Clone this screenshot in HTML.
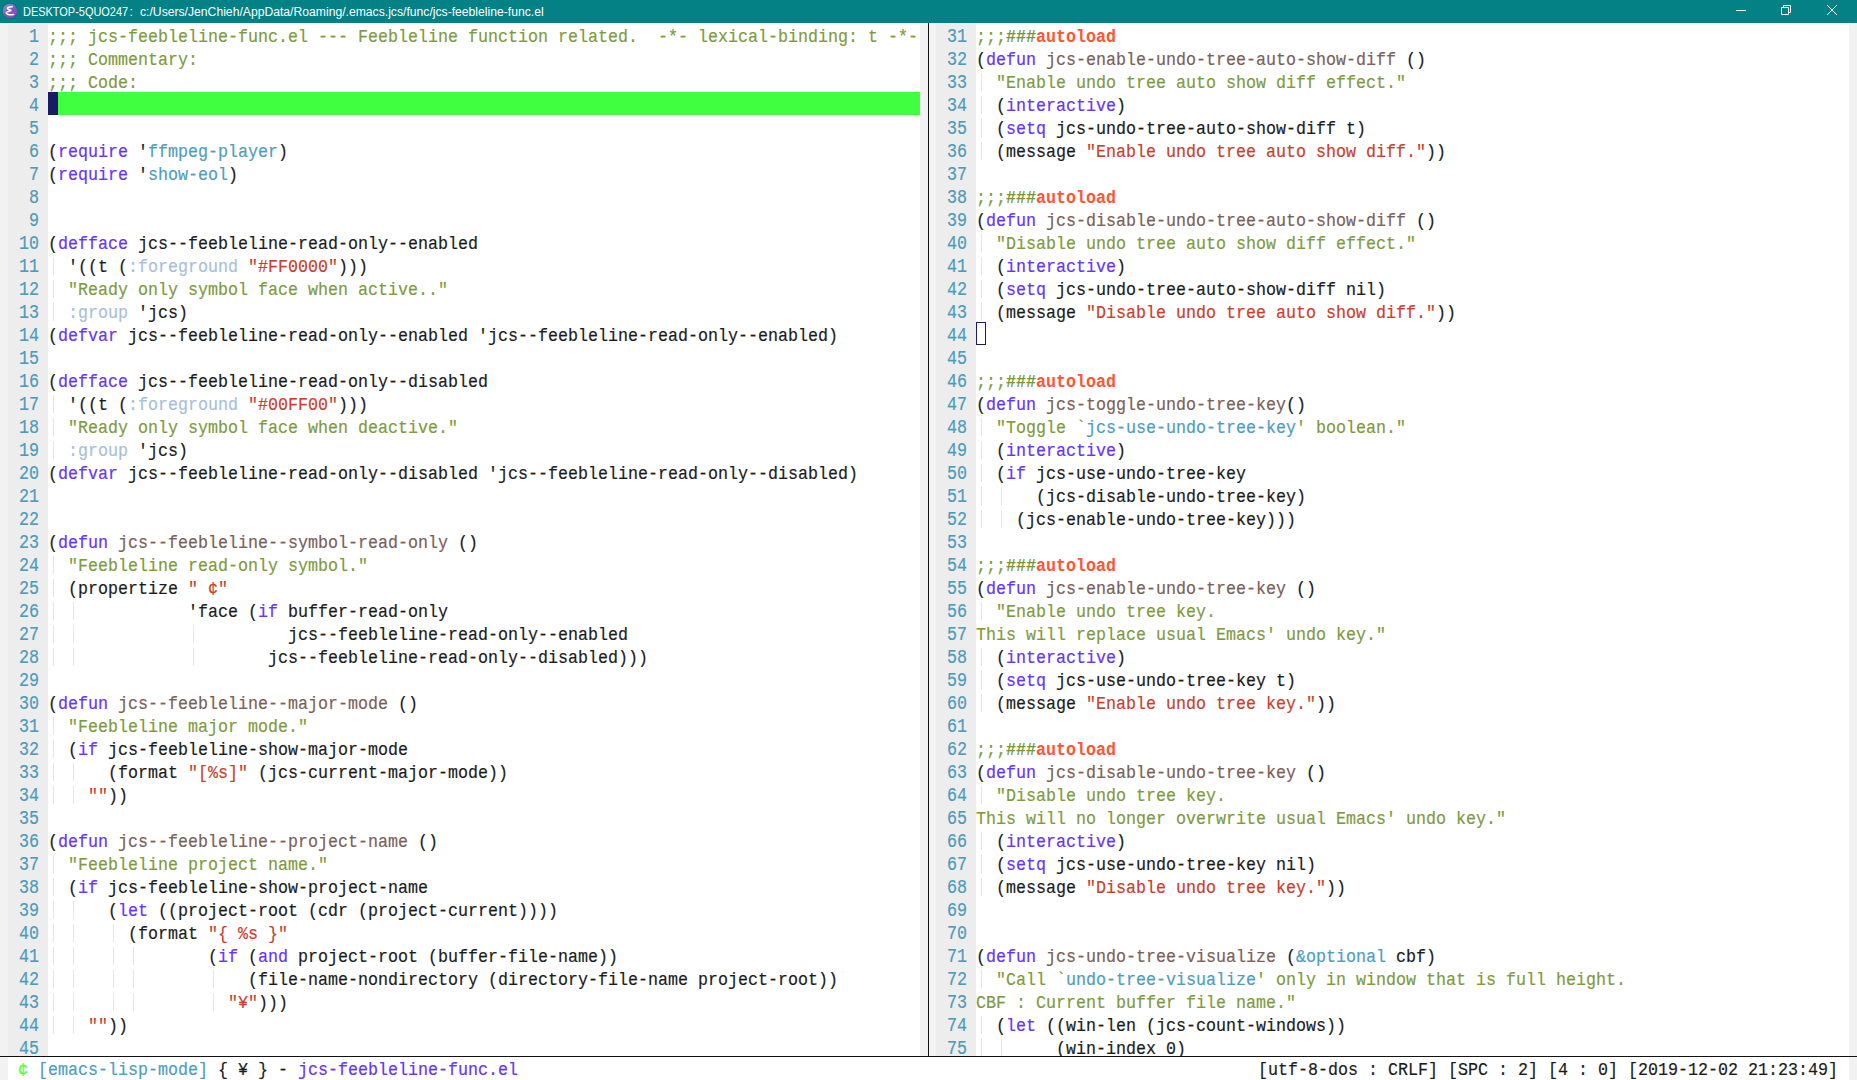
<!DOCTYPE html>
<html><head><meta charset="utf-8"><style>
*{margin:0;padding:0}
html,body{width:1857px;height:1080px;overflow:hidden;background:#fff}
body{position:relative;font-family:"Liberation Mono",monospace}
.abs{position:absolute}
#title{position:absolute;left:0;top:0;width:1857px;height:23px;background:#038185}
.tt{position:absolute;top:5px;transform-origin:0 0;font-family:"Liberation Sans",sans-serif;font-size:12.6px;color:#fff;white-space:pre;line-height:15px}
.tx,.ln{position:absolute;white-space:pre;font-size:19px;line-height:23px;height:23px;transform:scaleX(0.87705);transform-origin:0 0;color:#1b1b1b;-webkit-text-stroke:0.2px currentColor}
.ln{color:#4b9bbc;transform-origin:100% 0;font-size:20px;transform:scaleX(0.8333)}
.g{position:absolute;width:1px;height:18px;background:#e3e6ea}
i{font-style:normal}
i.k{color:#6633ff}
i.f{color:#7b5f5a}
i.c{color:#7f9a3c}
i.d{color:#7f9a3c}
i.s{color:#c9402c}
i.q{color:#4e9dbd}
i.p{color:#a8bfd8}
i.a{color:#ff5533;font-weight:bold;-webkit-text-stroke:0}
i.h{color:#759636;font-weight:bold;-webkit-text-stroke:0}
</style></head><body>
<div id="title"></div>
<svg class="abs" style="left:0;top:0" width="23" height="23"><defs><linearGradient id="eg" x1="0.2" y1="0.1" x2="0.8" y2="0.95"><stop offset="0" stop-color="#8f86cf"/><stop offset="0.55" stop-color="#7c56b8"/><stop offset="1" stop-color="#a43cc4"/></linearGradient></defs><circle cx="9.9" cy="10.9" r="7.7" fill="#2f4a78" opacity="0.45"/><circle cx="9.9" cy="10.9" r="7.2" fill="url(#eg)"/><path d="M12.3 6.5 C10.6 7.3 7.8 6.9 7.4 8.2 C7.3 9.3 10.2 9.8 11 10.5 C9.6 11.3 6.1 11.8 6.3 12.9 C6.9 14.5 11 14.8 13.6 14.6" stroke="#fff" stroke-width="1.5" fill="none" stroke-linecap="round" stroke-linejoin="round"/></svg>
<div class="tt" style="left:23px;transform:scaleX(0.87)">DESKTOP-5QUO247</div>
<div class="tt" style="left:129.5px">:</div>
<div class="tt" style="left:139.8px;transform:scaleX(0.966)">c:/Users/JenChieh/AppData/Roaming/.emacs.jcs/func/jcs-feebleline-func.el</div>
<div class="abs" style="left:1736px;top:10px;width:10px;height:1px;background:#fff"></div>
<svg class="abs" style="left:1779px;top:3px" width="14" height="14"><path d="M2.5 4.5h7v7h-7z M4.5 4.5v-2h7v7h-2" stroke="#fff" stroke-width="1" fill="none"/></svg>
<svg class="abs" style="left:1825px;top:3px" width="14" height="14"><path d="M2 2L12 12M12 2L2 12" stroke="#fff" stroke-width="1" fill="none"/></svg>
<div class="abs" style="left:0;top:23px;width:8px;height:1033px;background:#f2f2f2"></div>
<div class="abs" style="left:8px;top:23px;width:40px;height:1033px;background:#ededed"></div>
<div class="abs" style="left:920px;top:23px;width:8px;height:1033px;background:#f2f2f2"></div>
<div class="abs" style="left:928px;top:23px;width:1px;height:1033px;background:#111"></div>
<div class="abs" style="left:929px;top:23px;width:7px;height:1033px;background:#f2f2f2"></div>
<div class="abs" style="left:936px;top:23px;width:40px;height:1033px;background:#ededed"></div>
<div class="abs" style="left:1849px;top:23px;width:8px;height:1033px;background:#f2f2f2"></div>
<div class="abs" style="left:48px;top:92px;width:872px;height:23px;background:#40ff40"></div>
<div class="abs" style="left:48px;top:92px;width:10px;height:23px;background:#1a1a66"></div>
<div class="abs" style="left:976px;top:322px;width:8px;height:21px;border:1px solid #1a1a66"></div>
<div class="numwrap">
<div class="ln" style="top:25px;right:1818px">1</div>
<div class="tx" style="top:26px;left:48px"><i class="c">;;; jcs-feebleline-func.el --- Feebleline function related.  -*- lexical-binding: t -*-</i></div>
<div class="ln" style="top:48px;right:1818px">2</div>
<div class="tx" style="top:49px;left:48px"><i class="c">;;; Commentary:</i></div>
<div class="ln" style="top:71px;right:1818px">3</div>
<div class="tx" style="top:72px;left:48px"><i class="c">;;; Code:</i></div>
<div class="ln" style="top:94px;right:1818px">4</div>
<div class="ln" style="top:117px;right:1818px">5</div>
<div class="ln" style="top:140px;right:1818px">6</div>
<div class="tx" style="top:141px;left:48px">(<i class="k">require</i> &#x27;<i class="q">ffmpeg-player</i>)</div>
<div class="ln" style="top:163px;right:1818px">7</div>
<div class="tx" style="top:164px;left:48px">(<i class="k">require</i> &#x27;<i class="q">show-eol</i>)</div>
<div class="ln" style="top:186px;right:1818px">8</div>
<div class="ln" style="top:209px;right:1818px">9</div>
<div class="ln" style="top:232px;right:1818px">10</div>
<div class="tx" style="top:233px;left:48px">(<i class="k">defface</i> jcs--feebleline-read-only--enabled</div>
<div class="ln" style="top:255px;right:1818px">11</div>
<div class="tx" style="top:256px;left:48px">  &#x27;((t (<i class="p">:foreground</i> <i class="s">&quot;#FF0000&quot;</i>)))</div>
<div class="g" style="top:257px;left:53px"></div>
<div class="ln" style="top:278px;right:1818px">12</div>
<div class="tx" style="top:279px;left:48px">  <i class="d">&quot;Ready only symbol face when active..&quot;</i></div>
<div class="g" style="top:280px;left:53px"></div>
<div class="ln" style="top:301px;right:1818px">13</div>
<div class="tx" style="top:302px;left:48px">  <i class="p">:group</i> &#x27;jcs)</div>
<div class="g" style="top:303px;left:53px"></div>
<div class="ln" style="top:324px;right:1818px">14</div>
<div class="tx" style="top:325px;left:48px">(<i class="k">defvar</i> jcs--feebleline-read-only--enabled &#x27;jcs--feebleline-read-only--enabled)</div>
<div class="ln" style="top:347px;right:1818px">15</div>
<div class="ln" style="top:370px;right:1818px">16</div>
<div class="tx" style="top:371px;left:48px">(<i class="k">defface</i> jcs--feebleline-read-only--disabled</div>
<div class="ln" style="top:393px;right:1818px">17</div>
<div class="tx" style="top:394px;left:48px">  &#x27;((t (<i class="p">:foreground</i> <i class="s">&quot;#00FF00&quot;</i>)))</div>
<div class="g" style="top:395px;left:53px"></div>
<div class="ln" style="top:416px;right:1818px">18</div>
<div class="tx" style="top:417px;left:48px">  <i class="d">&quot;Ready only symbol face when deactive.&quot;</i></div>
<div class="g" style="top:418px;left:53px"></div>
<div class="ln" style="top:439px;right:1818px">19</div>
<div class="tx" style="top:440px;left:48px">  <i class="p">:group</i> &#x27;jcs)</div>
<div class="g" style="top:441px;left:53px"></div>
<div class="ln" style="top:462px;right:1818px">20</div>
<div class="tx" style="top:463px;left:48px">(<i class="k">defvar</i> jcs--feebleline-read-only--disabled &#x27;jcs--feebleline-read-only--disabled)</div>
<div class="ln" style="top:485px;right:1818px">21</div>
<div class="ln" style="top:508px;right:1818px">22</div>
<div class="ln" style="top:531px;right:1818px">23</div>
<div class="tx" style="top:532px;left:48px">(<i class="k">defun</i> <i class="f">jcs--feebleline--symbol-read-only</i> ()</div>
<div class="ln" style="top:554px;right:1818px">24</div>
<div class="tx" style="top:555px;left:48px">  <i class="d">&quot;Feebleline read-only symbol.&quot;</i></div>
<div class="g" style="top:556px;left:53px"></div>
<div class="ln" style="top:577px;right:1818px">25</div>
<div class="tx" style="top:578px;left:48px">  (propertize <i class="s">&quot; ¢&quot;</i></div>
<div class="g" style="top:579px;left:53px"></div>
<div class="ln" style="top:600px;right:1818px">26</div>
<div class="tx" style="top:601px;left:48px">              &#x27;face (<i class="k">if</i> buffer-read-only</div>
<div class="g" style="top:602px;left:53px"></div>
<div class="g" style="top:602px;left:73px"></div>
<div class="ln" style="top:623px;right:1818px">27</div>
<div class="tx" style="top:624px;left:48px">                        jcs--feebleline-read-only--enabled</div>
<div class="g" style="top:625px;left:53px"></div>
<div class="g" style="top:625px;left:73px"></div>
<div class="g" style="top:625px;left:193px"></div>
<div class="ln" style="top:646px;right:1818px">28</div>
<div class="tx" style="top:647px;left:48px">                      jcs--feebleline-read-only--disabled)))</div>
<div class="g" style="top:648px;left:53px"></div>
<div class="g" style="top:648px;left:73px"></div>
<div class="g" style="top:648px;left:193px"></div>
<div class="ln" style="top:669px;right:1818px">29</div>
<div class="ln" style="top:692px;right:1818px">30</div>
<div class="tx" style="top:693px;left:48px">(<i class="k">defun</i> <i class="f">jcs--feebleline--major-mode</i> ()</div>
<div class="ln" style="top:715px;right:1818px">31</div>
<div class="tx" style="top:716px;left:48px">  <i class="d">&quot;Feebleline major mode.&quot;</i></div>
<div class="g" style="top:717px;left:53px"></div>
<div class="ln" style="top:738px;right:1818px">32</div>
<div class="tx" style="top:739px;left:48px">  (<i class="k">if</i> jcs-feebleline-show-major-mode</div>
<div class="g" style="top:740px;left:53px"></div>
<div class="ln" style="top:761px;right:1818px">33</div>
<div class="tx" style="top:762px;left:48px">      (format <i class="s">&quot;[%s]&quot;</i> (jcs-current-major-mode))</div>
<div class="g" style="top:763px;left:53px"></div>
<div class="g" style="top:763px;left:73px"></div>
<div class="ln" style="top:784px;right:1818px">34</div>
<div class="tx" style="top:785px;left:48px">    <i class="s">&quot;&quot;</i>))</div>
<div class="g" style="top:786px;left:53px"></div>
<div class="g" style="top:786px;left:73px"></div>
<div class="ln" style="top:807px;right:1818px">35</div>
<div class="ln" style="top:830px;right:1818px">36</div>
<div class="tx" style="top:831px;left:48px">(<i class="k">defun</i> <i class="f">jcs--feebleline--project-name</i> ()</div>
<div class="ln" style="top:853px;right:1818px">37</div>
<div class="tx" style="top:854px;left:48px">  <i class="d">&quot;Feebleline project name.&quot;</i></div>
<div class="g" style="top:855px;left:53px"></div>
<div class="ln" style="top:876px;right:1818px">38</div>
<div class="tx" style="top:877px;left:48px">  (<i class="k">if</i> jcs-feebleline-show-project-name</div>
<div class="g" style="top:878px;left:53px"></div>
<div class="ln" style="top:899px;right:1818px">39</div>
<div class="tx" style="top:900px;left:48px">      (<i class="k">let</i> ((project-root (cdr (project-current))))</div>
<div class="g" style="top:901px;left:53px"></div>
<div class="g" style="top:901px;left:73px"></div>
<div class="ln" style="top:922px;right:1818px">40</div>
<div class="tx" style="top:923px;left:48px">        (format <i class="s">&quot;{ %s }&quot;</i></div>
<div class="g" style="top:924px;left:53px"></div>
<div class="g" style="top:924px;left:73px"></div>
<div class="g" style="top:924px;left:113px"></div>
<div class="ln" style="top:945px;right:1818px">41</div>
<div class="tx" style="top:946px;left:48px">                (<i class="k">if</i> (<i class="k">and</i> project-root (buffer-file-name))</div>
<div class="g" style="top:947px;left:53px"></div>
<div class="g" style="top:947px;left:73px"></div>
<div class="g" style="top:947px;left:113px"></div>
<div class="g" style="top:947px;left:133px"></div>
<div class="ln" style="top:968px;right:1818px">42</div>
<div class="tx" style="top:969px;left:48px">                    (file-name-nondirectory (directory-file-name project-root))</div>
<div class="g" style="top:970px;left:53px"></div>
<div class="g" style="top:970px;left:73px"></div>
<div class="g" style="top:970px;left:113px"></div>
<div class="g" style="top:970px;left:133px"></div>
<div class="g" style="top:970px;left:213px"></div>
<div class="ln" style="top:991px;right:1818px">43</div>
<div class="tx" style="top:992px;left:48px">                  <i class="s">&quot;¥&quot;</i>)))</div>
<div class="g" style="top:993px;left:53px"></div>
<div class="g" style="top:993px;left:73px"></div>
<div class="g" style="top:993px;left:113px"></div>
<div class="g" style="top:993px;left:133px"></div>
<div class="g" style="top:993px;left:213px"></div>
<div class="ln" style="top:1014px;right:1818px">44</div>
<div class="tx" style="top:1015px;left:48px">    <i class="s">&quot;&quot;</i>))</div>
<div class="g" style="top:1016px;left:53px"></div>
<div class="g" style="top:1016px;left:73px"></div>
<div class="ln" style="top:1037px;right:1818px">45</div>
<div class="ln" style="top:25px;right:890px">31</div>
<div class="tx" style="top:26px;left:976px"><i class="c">;;;</i><i class="h">###</i><i class="a">autoload</i></div>
<div class="ln" style="top:48px;right:890px">32</div>
<div class="tx" style="top:49px;left:976px">(<i class="k">defun</i> <i class="f">jcs-enable-undo-tree-auto-show-diff</i> ()</div>
<div class="ln" style="top:71px;right:890px">33</div>
<div class="tx" style="top:72px;left:976px">  <i class="d">&quot;Enable undo tree auto show diff effect.&quot;</i></div>
<div class="g" style="top:73px;left:981px"></div>
<div class="ln" style="top:94px;right:890px">34</div>
<div class="tx" style="top:95px;left:976px">  (<i class="k">interactive</i>)</div>
<div class="g" style="top:96px;left:981px"></div>
<div class="ln" style="top:117px;right:890px">35</div>
<div class="tx" style="top:118px;left:976px">  (<i class="k">setq</i> jcs-undo-tree-auto-show-diff t)</div>
<div class="g" style="top:119px;left:981px"></div>
<div class="ln" style="top:140px;right:890px">36</div>
<div class="tx" style="top:141px;left:976px">  (message <i class="s">&quot;Enable undo tree auto show diff.&quot;</i>))</div>
<div class="g" style="top:142px;left:981px"></div>
<div class="ln" style="top:163px;right:890px">37</div>
<div class="ln" style="top:186px;right:890px">38</div>
<div class="tx" style="top:187px;left:976px"><i class="c">;;;</i><i class="h">###</i><i class="a">autoload</i></div>
<div class="ln" style="top:209px;right:890px">39</div>
<div class="tx" style="top:210px;left:976px">(<i class="k">defun</i> <i class="f">jcs-disable-undo-tree-auto-show-diff</i> ()</div>
<div class="ln" style="top:232px;right:890px">40</div>
<div class="tx" style="top:233px;left:976px">  <i class="d">&quot;Disable undo tree auto show diff effect.&quot;</i></div>
<div class="g" style="top:234px;left:981px"></div>
<div class="ln" style="top:255px;right:890px">41</div>
<div class="tx" style="top:256px;left:976px">  (<i class="k">interactive</i>)</div>
<div class="g" style="top:257px;left:981px"></div>
<div class="ln" style="top:278px;right:890px">42</div>
<div class="tx" style="top:279px;left:976px">  (<i class="k">setq</i> jcs-undo-tree-auto-show-diff nil)</div>
<div class="g" style="top:280px;left:981px"></div>
<div class="ln" style="top:301px;right:890px">43</div>
<div class="tx" style="top:302px;left:976px">  (message <i class="s">&quot;Disable undo tree auto show diff.&quot;</i>))</div>
<div class="g" style="top:303px;left:981px"></div>
<div class="ln" style="top:324px;right:890px">44</div>
<div class="ln" style="top:347px;right:890px">45</div>
<div class="ln" style="top:370px;right:890px">46</div>
<div class="tx" style="top:371px;left:976px"><i class="c">;;;</i><i class="h">###</i><i class="a">autoload</i></div>
<div class="ln" style="top:393px;right:890px">47</div>
<div class="tx" style="top:394px;left:976px">(<i class="k">defun</i> <i class="f">jcs-toggle-undo-tree-key</i>()</div>
<div class="ln" style="top:416px;right:890px">48</div>
<div class="tx" style="top:417px;left:976px">  <i class="d">&quot;Toggle `</i><i class="q">jcs-use-undo-tree-key</i><i class="d">&#x27; boolean.&quot;</i></div>
<div class="g" style="top:418px;left:981px"></div>
<div class="ln" style="top:439px;right:890px">49</div>
<div class="tx" style="top:440px;left:976px">  (<i class="k">interactive</i>)</div>
<div class="g" style="top:441px;left:981px"></div>
<div class="ln" style="top:462px;right:890px">50</div>
<div class="tx" style="top:463px;left:976px">  (<i class="k">if</i> jcs-use-undo-tree-key</div>
<div class="g" style="top:464px;left:981px"></div>
<div class="ln" style="top:485px;right:890px">51</div>
<div class="tx" style="top:486px;left:976px">      (jcs-disable-undo-tree-key)</div>
<div class="g" style="top:487px;left:981px"></div>
<div class="g" style="top:487px;left:1001px"></div>
<div class="ln" style="top:508px;right:890px">52</div>
<div class="tx" style="top:509px;left:976px">    (jcs-enable-undo-tree-key)))</div>
<div class="g" style="top:510px;left:981px"></div>
<div class="g" style="top:510px;left:1001px"></div>
<div class="ln" style="top:531px;right:890px">53</div>
<div class="ln" style="top:554px;right:890px">54</div>
<div class="tx" style="top:555px;left:976px"><i class="c">;;;</i><i class="h">###</i><i class="a">autoload</i></div>
<div class="ln" style="top:577px;right:890px">55</div>
<div class="tx" style="top:578px;left:976px">(<i class="k">defun</i> <i class="f">jcs-enable-undo-tree-key</i> ()</div>
<div class="ln" style="top:600px;right:890px">56</div>
<div class="tx" style="top:601px;left:976px">  <i class="d">&quot;Enable undo tree key.</i></div>
<div class="g" style="top:602px;left:981px"></div>
<div class="ln" style="top:623px;right:890px">57</div>
<div class="tx" style="top:624px;left:976px"><i class="d">This will replace usual Emacs&#x27; undo key.&quot;</i></div>
<div class="ln" style="top:646px;right:890px">58</div>
<div class="tx" style="top:647px;left:976px">  (<i class="k">interactive</i>)</div>
<div class="g" style="top:648px;left:981px"></div>
<div class="ln" style="top:669px;right:890px">59</div>
<div class="tx" style="top:670px;left:976px">  (<i class="k">setq</i> jcs-use-undo-tree-key t)</div>
<div class="g" style="top:671px;left:981px"></div>
<div class="ln" style="top:692px;right:890px">60</div>
<div class="tx" style="top:693px;left:976px">  (message <i class="s">&quot;Enable undo tree key.&quot;</i>))</div>
<div class="g" style="top:694px;left:981px"></div>
<div class="ln" style="top:715px;right:890px">61</div>
<div class="ln" style="top:738px;right:890px">62</div>
<div class="tx" style="top:739px;left:976px"><i class="c">;;;</i><i class="h">###</i><i class="a">autoload</i></div>
<div class="ln" style="top:761px;right:890px">63</div>
<div class="tx" style="top:762px;left:976px">(<i class="k">defun</i> <i class="f">jcs-disable-undo-tree-key</i> ()</div>
<div class="ln" style="top:784px;right:890px">64</div>
<div class="tx" style="top:785px;left:976px">  <i class="d">&quot;Disable undo tree key.</i></div>
<div class="g" style="top:786px;left:981px"></div>
<div class="ln" style="top:807px;right:890px">65</div>
<div class="tx" style="top:808px;left:976px"><i class="d">This will no longer overwrite usual Emacs&#x27; undo key.&quot;</i></div>
<div class="ln" style="top:830px;right:890px">66</div>
<div class="tx" style="top:831px;left:976px">  (<i class="k">interactive</i>)</div>
<div class="g" style="top:832px;left:981px"></div>
<div class="ln" style="top:853px;right:890px">67</div>
<div class="tx" style="top:854px;left:976px">  (<i class="k">setq</i> jcs-use-undo-tree-key nil)</div>
<div class="g" style="top:855px;left:981px"></div>
<div class="ln" style="top:876px;right:890px">68</div>
<div class="tx" style="top:877px;left:976px">  (message <i class="s">&quot;Disable undo tree key.&quot;</i>))</div>
<div class="g" style="top:878px;left:981px"></div>
<div class="ln" style="top:899px;right:890px">69</div>
<div class="ln" style="top:922px;right:890px">70</div>
<div class="ln" style="top:945px;right:890px">71</div>
<div class="tx" style="top:946px;left:976px">(<i class="k">defun</i> <i class="f">jcs-undo-tree-visualize</i> (<i class="q">&amp;optional</i> cbf)</div>
<div class="ln" style="top:968px;right:890px">72</div>
<div class="tx" style="top:969px;left:976px">  <i class="d">&quot;Call `</i><i class="q">undo-tree-visualize</i><i class="d">&#x27; only in window that is full height.</i></div>
<div class="g" style="top:970px;left:981px"></div>
<div class="ln" style="top:991px;right:890px">73</div>
<div class="tx" style="top:992px;left:976px"><i class="d">CBF : Current buffer file name.&quot;</i></div>
<div class="ln" style="top:1014px;right:890px">74</div>
<div class="tx" style="top:1015px;left:976px">  (<i class="k">let</i> ((win-len (jcs-count-windows))</div>
<div class="g" style="top:1016px;left:981px"></div>
<div class="ln" style="top:1037px;right:890px">75</div>
<div class="tx" style="top:1038px;left:976px">        (win-index 0)</div>
<div class="g" style="top:1039px;left:981px"></div>
<div class="g" style="top:1039px;left:1001px"></div>
</div>
<div class="abs" style="left:0;top:1057px;width:1857px;height:23px;background:#fff"></div>
<div class="abs" style="left:0;top:1056px;width:1857px;height:1px;background:#111"></div>
<div class="abs" style="left:0;top:1057px;width:8px;height:23px;background:#f2f2f2"></div>
<div class="abs" style="left:1849px;top:1057px;width:8px;height:23px;background:#f2f2f2"></div>
<div class="tx" style="top:1059px;left:18px"><i style="color:#4cff3c">¢</i> <i class="q">[emacs-lisp-mode]</i> { ¥ } - <i class="k">jcs-feebleline-func.el</i></div>
<div class="tx" style="top:1059px;left:1258px">[utf-8-dos : CRLF] [SPC : 2] [4 : 0] [2019-12-02 21:23:49]</div>
</body></html>
